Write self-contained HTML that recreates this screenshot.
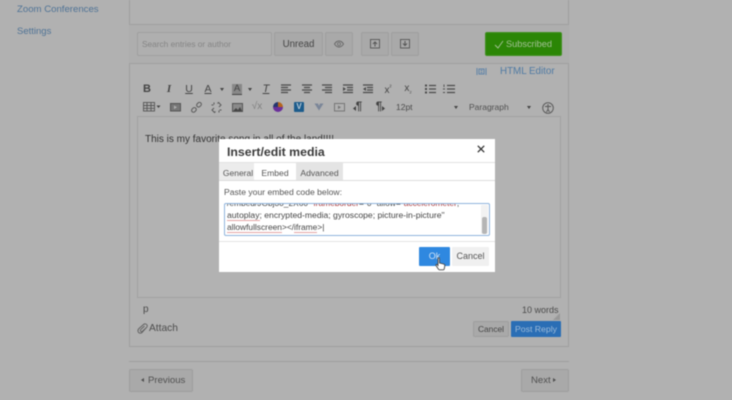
<!DOCTYPE html>
<html>
<head>
<meta charset="utf-8">
<style>
html,body{margin:0;padding:0;}
body{width:732px;height:400px;overflow:hidden;background:#b1b1b1;position:relative;font-family:"Liberation Sans",sans-serif;}
#w{position:absolute;left:0;top:0;width:732px;height:400px;filter:blur(0.6px);overflow:hidden;}
.a{position:absolute;box-sizing:border-box;white-space:nowrap;}
.btn{background:#a9a9a9;border:1px solid #9e9e9e;border-radius:2px;color:#454545;text-align:center;}
.ic{color:#444;font-size:10px;line-height:12px;text-align:center;width:14px;}
.sp{border-bottom:1px solid #e3a5a5;}
svg{position:absolute;overflow:visible;}
</style>
</head>
<body>
<div id="w">
<!-- sidebar -->
<div class="a" style="left:17px;top:3px;font-size:9.6px;line-height:13px;color:#4f7396;">Zoom Conferences</div>
<div class="a" style="left:17px;top:25px;font-size:9.5px;line-height:13px;color:#4f7396;">Settings</div>

<!-- main column -->
<div class="a" style="left:129px;top:-2px;width:440px;height:349px;border:1px solid #9f9f9f;"></div>
<div class="a" style="left:129px;top:24px;width:440px;height:40px;border-top:1px solid #a0a0a0;border-bottom:1px solid #a0a0a0;background:#aeaeae;"></div>

<!-- toolbar -->
<div class="a" style="left:137px;top:32px;width:135px;height:24px;background:#afafaf;border:1px solid #9f9f9f;border-radius:2px;color:#858585;font-size:8.3px;line-height:23px;padding-left:4px;">Search entries or author</div>
<div class="a btn" style="left:274px;top:32px;width:49px;height:24px;font-size:9.7px;line-height:23px;">Unread</div>
<div class="a btn" style="left:325px;top:32px;width:28px;height:24px;"></div>
<svg style="left:334px;top:40px" width="10" height="8" viewBox="0 0 10 8"><path d="M.5 4C2 1.500 3.500 1 5 1s3 .5 4.500 3C8 6.500 6.500 7 5 7S2 6.500.5 4z" fill="none" stroke="#666" stroke-width=".9"/><circle cx="5" cy="4" r="1.500" fill="none" stroke="#666" stroke-width=".8"/></svg>
<div class="a btn" style="left:361px;top:32px;width:28px;height:24px;"></div>
<svg style="left:370px;top:39px" width="10" height="10" viewBox="0 0 10 10"><rect x=".5" y=".5" width="9" height="8.500" fill="none" stroke="#555" stroke-width=".9"/><path d="M5 7.500V3M3 5l2-2 2 2" fill="none" stroke="#555"/></svg>
<div class="a btn" style="left:391px;top:32px;width:28px;height:24px;"></div>
<svg style="left:400px;top:39px" width="10" height="10" viewBox="0 0 10 10"><rect x=".5" y=".5" width="9" height="8.500" fill="none" stroke="#555" stroke-width=".9"/><path d="M5 2v4.500M3 4.500l2 2 2-2" fill="none" stroke="#555"/></svg>
<div class="a" style="left:485px;top:32px;width:77px;height:24px;background:#2b8606;border:1px solid #3f8f20;border-radius:2px;color:#a3c295;font-size:9.2px;line-height:23px;padding-left:20px;">Subscribed</div>
<svg style="left:494px;top:40px" width="10" height="9" viewBox="0 0 10 9"><path d="M1 5l3 3 5-7" fill="none" stroke="#a3c295" stroke-width=".9"/></svg>

<!-- html editor -->
<svg style="left:476px;top:67px" width="11" height="9" viewBox="0 0 11 9"><path d="M1 1v7M10 1v7M3 2h5v5H3zM4.500 3.500h2M4.500 5.500h2" fill="none" stroke="#5f84a8" stroke-width="1"/></svg>
<div class="a" style="left:500px;top:65px;font-size:9.8px;line-height:13px;color:#4f7aa3;">HTML Editor</div>

<!-- tinymce row 1 -->
<div class="a ic" style="left:140px;top:83px;font-weight:bold;font-size:11px;">B</div>
<div class="a ic" style="left:162px;top:83px;font-style:italic;font-family:'Liberation Serif',serif;font-weight:bold;font-size:11px;">I</div>
<div class="a ic" style="left:182px;top:83px;text-decoration:underline;font-size:10.5px;">U</div>
<div class="a ic" style="left:201px;top:83px;text-decoration:underline;font-size:10.5px;">A</div>
<div class="a" style="left:220px;top:88px;border-left:2px solid transparent;border-right:2px solid transparent;border-top:3px solid #444;"></div>
<div class="a" style="left:232px;top:84px;width:10px;height:11px;background:#888;color:#444;font-size:9.5px;line-height:10px;text-align:center;border-bottom:1px solid #444;">A</div>
<div class="a" style="left:248px;top:88px;border-left:2px solid transparent;border-right:2px solid transparent;border-top:3px solid #444;"></div>
<div class="a ic" style="left:259px;top:83px;font-style:italic;text-decoration:underline;font-size:11px;">T</div>
<svg style="left:281px;top:84px" width="100" height="10" viewBox="0 0 100 10"><g fill="none" stroke="#4a4a4a" stroke-width="1.300"><path d="M0 1h10M0 3.500h7M0 6h10M0 8.500h7"/><path d="M21 1h10M23 3.500h6M21 6h10M23 8.500h6"/><path d="M41 1h10M44 3.500h7M41 6h10M44 8.500h7"/><path d="M62 1h10M66 3.500h6M66 6h6M62 8.500h10"/><path d="M82 1h10M86 3.500h6M86 6h6M82 8.500h10"/></g><path d="M62 3l3 2-3 2zM85 3l-3 2 3 2z" fill="#4a4a4a"/></svg>
<div class="a ic" style="left:381px;top:82px;font-size:10px;">x<span style="font-size:6px;vertical-align:4px;">²</span></div>
<div class="a ic" style="left:401px;top:83px;font-size:10px;">x<span style="font-size:6px;vertical-align:-2px;">₂</span></div>
<svg style="left:425px;top:84px" width="32" height="10" viewBox="0 0 32 10"><g fill="none" stroke="#4a4a4a" stroke-width="1.200"><path d="M4 1.500h7M4 5h7M4 8.500h7M22 1.500h8M22 5h8M22 8.500h8"/><path d="M1 .5v2M1 4v2M1 7.500v2" stroke-width="2"/><path d="M19 .5v2.500M18 5h2M18 8.500h2" stroke-width=".9"/></g></svg>

<!-- tinymce row 2 -->
<svg style="left:143px;top:102px" width="18" height="10" viewBox="0 0 18 10"><g fill="none" stroke="#555" stroke-width=".9"><rect x=".5" y=".5" width="11" height="8.500"/><path d="M.5 3.500h11M.5 6.300h11M4 .5v8.500M8 .5v8.500"/></g><path d="M13.500 3.500h4l-2 2.500z" fill="#444"/></svg>
<svg style="left:170px;top:103px" width="11" height="9" viewBox="0 0 11 9"><rect x=".5" y=".5" width="10" height="7.500" fill="#777" stroke="#555"/><path d="M4 2.500l3 1.800-3 1.800z" fill="#b0b0b0"/></svg>
<svg style="left:191px;top:102px" width="11" height="11" viewBox="0 0 11 11"><g fill="none" stroke="#5a5a5a" stroke-width="1"><rect x="5.500" y=".8" width="5" height="3.800" rx="1.800" transform="rotate(-45 8 2.700)"/><rect x=".5" y="6" width="5" height="3.800" rx="1.800" transform="rotate(-45 3 8)"/></g></svg>
<svg style="left:211px;top:102px" width="11" height="11" viewBox="0 0 11 11"><g fill="none" stroke="#5a5a5a" stroke-width="1"><path d="M6.500 1.500l1-1 2.500 2.500-2 2M4.500 9.500l-1 1L1 8l2-2M3 .5v2M.5 3h2M8 8.500v2M8.500 8h2"/></g></svg>
<svg style="left:232px;top:103px" width="11" height="9" viewBox="0 0 11 9"><rect x=".5" y=".5" width="10" height="8" fill="#8a8a8a" stroke="#555"/><path d="M1 8l3-3 2 2 2-3 2 4z" fill="#444"/></svg>
<div class="a ic" style="left:250px;top:101px;color:#808080;font-size:10px;">√x</div>
<div class="a" style="left:273px;top:102px;width:10px;height:10px;border-radius:50%;background:conic-gradient(#b5651d 0 25%,#6a2f9a 25% 75%,#25356e 75%);"></div>
<div class="a" style="left:294px;top:102px;width:10px;height:10px;background:#1c5c8c;border-radius:1px;color:#b9cad6;font-size:8px;line-height:10px;font-weight:bold;text-align:center;">V</div>
<svg style="left:314px;top:103px" width="10" height="8" viewBox="0 0 10 8"><path d="M.5.500h3.500L5 3l1-2.500h3.500L5 7.500z" fill="#7b8698"/></svg>
<svg style="left:334px;top:103px" width="11" height="9" viewBox="0 0 11 9"><rect x=".5" y=".5" width="10" height="7.500" fill="none" stroke="#777"/><path d="M4 2.500l3 1.800-3 1.800z" fill="#777"/></svg>
<div class="a ic" style="left:352px;top:101px;font-weight:bold;font-size:11.5px;">¶</div>
<svg style="left:353px;top:106px" width="3" height="5" viewBox="0 0 3 5"><path d="M3 0L0 2.500 3 5z" fill="#444"/></svg>
<div class="a ic" style="left:372px;top:101px;font-weight:bold;font-size:11.5px;">¶</div>
<svg style="left:382px;top:106px" width="3" height="5" viewBox="0 0 3 5"><path d="M0 0l3 2.500L0 5z" fill="#444"/></svg>
<div class="a" style="left:396px;top:102px;font-size:8.5px;line-height:11px;color:#4b4b4b;">12pt</div>
<div class="a" style="left:454px;top:106px;border-left:2px solid transparent;border-right:2px solid transparent;border-top:3px solid #444;"></div>
<div class="a" style="left:469px;top:102px;font-size:8.5px;line-height:11px;color:#505050;">Paragraph</div>
<div class="a" style="left:527px;top:106px;border-left:2px solid transparent;border-right:2px solid transparent;border-top:3px solid #444;"></div>
<svg style="left:542px;top:102px" width="12" height="12" viewBox="0 0 12 12"><circle cx="6" cy="6" r="5.300" fill="none" stroke="#555" stroke-width=".9"/><path d="M3 4.500h6M6 4.500v3M6 7.500l-1.500 2.500M6 7.500l1.500 2.500" fill="none" stroke="#555" stroke-width=".9"/><circle cx="6" cy="3" r=".8" fill="#555"/></svg>

<!-- editor area -->
<div class="a" style="left:137px;top:116px;width:424px;height:182px;border:1px solid #a1a1a1;background:#b2b2b2;"></div>
<div class="a" style="left:145px;top:133px;font-size:10px;line-height:13px;color:#333;">This is my favorite song in all of the land!!!!</div>

<!-- footer of editor -->
<div class="a" style="left:143px;top:304px;font-size:10px;line-height:12px;color:#4a4a4a;">p</div>
<div class="a" style="left:522px;top:304px;font-size:9px;line-height:12px;color:#4a4a4a;">10 words</div>
<svg style="left:553px;top:313px" width="7" height="7" viewBox="0 0 7 7"><path d="M7 0v7H0z" fill="#989898"/></svg>
<svg style="left:137px;top:323px" width="11" height="11" viewBox="0 0 11 11"><path d="M9.500 4.500L5 9.500c-1.500 1.300-3.500.5-4-1-.3-1 0-2 1-3L6.500 1.500c1-.9 2.500-.8 3.300.2.700.9.500 2-.3 2.800L5.300 8.300c-.6.500-1.400.4-1.800-.2-.3-.5-.2-1 .2-1.500L7.500 3" fill="none" stroke="#5f5f5f" stroke-width=".9"/></svg>
<div class="a" style="left:149px;top:322px;font-size:10.2px;line-height:13px;color:#4d4d4d;">Attach</div>
<div class="a btn" style="left:473px;top:321px;width:36px;height:16px;font-size:8.4px;line-height:15px;">Cancel</div>
<div class="a" style="left:511px;top:321px;width:50px;height:16px;background:#2a6eb5;border-radius:1px;color:#9dbbd9;font-size:8.7px;line-height:16px;text-align:center;">Post Reply</div>

<!-- pager -->
<div class="a" style="left:129px;top:361px;width:440px;height:1px;background:#a0a0a0;"></div>
<div class="a btn" style="left:129px;top:369px;width:64px;height:23px;"></div>
<div class="a" style="left:141px;top:378px;border-top:2px solid transparent;border-bottom:2px solid transparent;border-right:3px solid #505050;"></div>
<div class="a" style="left:148px;top:374px;font-size:9.6px;line-height:13px;color:#505050;">Previous</div>
<div class="a btn" style="left:521px;top:369px;width:48px;height:23px;"></div>
<div class="a" style="left:531px;top:374px;font-size:9.6px;line-height:13px;color:#505050;">Next</div>
<div class="a" style="left:553px;top:378px;border-top:2px solid transparent;border-bottom:2px solid transparent;border-left:3px solid #505050;"></div>

<!-- modal -->
<div class="a" style="left:219px;top:139px;width:276px;height:133px;background:#fff;"></div>
<div class="a" style="left:227px;top:144px;font-size:12.3px;line-height:16px;font-weight:bold;color:#3a3a3a;">Insert/edit media</div>
<svg style="left:477px;top:145px" width="8" height="8" viewBox="0 0 8 8"><path d="M.8.800l6.400 6.400M7.200.800L.8 7.200" stroke="#333" stroke-width="1.300"/></svg>
<div class="a" style="left:219px;top:162px;width:276px;height:1px;background:#e2e2e2;"></div>
<div class="a" style="left:219px;top:163px;width:35px;height:18px;background:#ececec;font-size:8.5px;line-height:20px;text-align:center;color:#555;padding-left:3px;">General</div>
<div class="a" style="left:254px;top:163px;width:42px;height:18px;background:#fff;font-size:8.6px;line-height:20px;text-align:center;color:#555;">Embed</div>
<div class="a" style="left:296px;top:163px;width:47px;height:18px;background:#e4e4e4;font-size:8.6px;line-height:20px;text-align:center;color:#555;">Advanced</div>
<div class="a" style="left:219px;top:180px;width:276px;height:1px;background:#dcdcdc;"></div>
<div class="a" style="left:224px;top:186px;font-size:8.6px;line-height:12px;color:#555;">Paste your embed code below:</div>

<!-- textarea -->
<div class="a" style="left:224px;top:203px;width:266px;height:33px;border:1px solid #8fb4dc;border-radius:2px;background:#fff;overflow:hidden;">
 <div class="a" style="left:2px;top:-6px;font-size:8.4px;line-height:11.5px;color:#444;">/embed/JGbj30_2X60" <span style="color:#a33;">frameborder</span>="0" allow="<span style="color:#a33;">accelerometer</span>;</div>
 <div class="a" style="left:2px;top:6px;font-size:8.6px;line-height:11.5px;color:#444;"><span class="sp">autoplay</span>; encrypted-media; gyroscope; picture-in-picture"</div>
 <div class="a" style="left:2px;top:18px;font-size:8.4px;line-height:11.5px;color:#444;"><span class="sp">allowfullscreen</span>&gt;&lt;/<span class="sp">iframe</span>&gt;|</div>
 <div class="a" style="left:256px;top:1px;width:7px;height:29px;background:#f2f2f2;"></div>
 <div class="a" style="left:257px;top:13px;width:5px;height:17px;background:#b5b5b5;border-radius:2px;"></div>
</div>

<div class="a" style="left:219px;top:241px;width:276px;height:1px;background:#e4e4e4;"></div>
<div class="a" style="left:419px;top:247px;width:31px;height:19px;background:#2f88e0;border-radius:1px;color:#cfe2f5;font-size:9px;line-height:19px;text-align:center;">Ok</div>
<div class="a" style="left:452px;top:247px;width:37px;height:19px;background:#f0f0f0;border-radius:1px;color:#555;font-size:9px;line-height:19px;text-align:center;">Cancel</div>
<!-- hand cursor -->
<svg style="left:435px;top:257px" width="11" height="14" viewBox="0 0 11 14"><path d="M3 1.500c0-1 1.500-1 1.500 0V6l4 1c1 .3 1.500 1 1.300 2l-.6 3c-.1.500-.5.800-1 .8H4.500c-.5 0-.8-.2-1-.6L1 8.500c-.4-.8.600-1.500 1.200-.8L3 8.500z" fill="#fff" stroke="#444" stroke-width=".9"/></svg>
</div>
</body>
</html>
